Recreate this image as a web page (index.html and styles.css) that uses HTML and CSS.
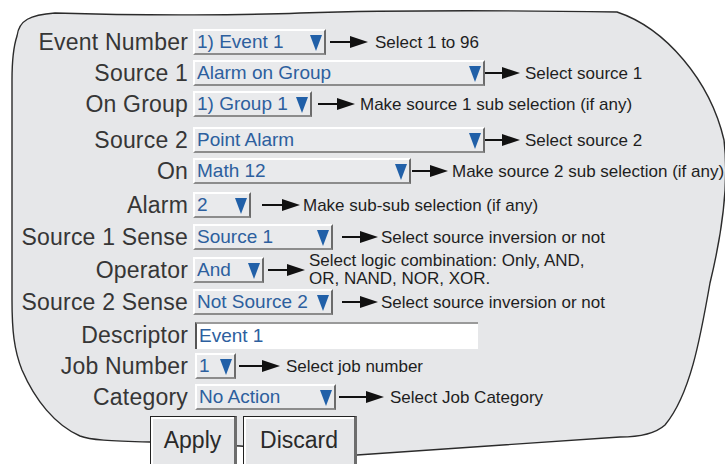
FILE: index.html
```html
<!DOCTYPE html>
<html lang="en">
  <head>
    <meta charset="utf-8" />
    <meta name="viewport" content="width=device-width, initial-scale=1" />
    <title>Event configuration</title>
    <link rel="stylesheet" href="styles.css">
  </head>

  <body>
    <main class="screen">
      <svg class="outline" width="725" height="464" viewBox="0 0 725 464">
        <path d="M17,36 C19,20 30,15 55,13 C150,16 250,15 300,13 C400,10 550,11 617,12 C665,28 710,80 724,140 C730,190 718,250 710,283 C700,340 690,395 665,425 C655,434 640,437 620,437 L357,455 L240,446 L150,442 C110,441 90,440 80,436 C55,425 35,400 22,370 C14,350 12,330 12,300 L12,80 C12,55 14,45 17,36 Z" />
      </svg>

      <section class="form">
        <label class="lbl">Event Number</label>
        <div class="ctl event">
          <div class="sel"><span class="val">1) Event 1</span><i class="drop"></i></div>
          <span class="arrow"></span>
          <span class="note">Select 1 to 96</span>
        </div>

        <label class="lbl">Source 1</label>
        <div class="ctl src">
          <div class="sel"><span class="val">Alarm on Group</span><i class="drop"></i></div>
          <span class="arrow"></span>
          <span class="note">Select source 1</span>
        </div>

        <label class="lbl">On Group</label>
        <div class="ctl group">
          <div class="sel"><span class="val">1) Group 1</span><i class="drop"></i></div>
          <span class="arrow"></span>
          <span class="note">Make source 1 sub selection (if any)</span>
        </div>

        <label class="lbl">Source 2</label>
        <div class="ctl src">
          <div class="sel"><span class="val">Point Alarm</span><i class="drop"></i></div>
          <span class="arrow"></span>
          <span class="note">Select source 2</span>
        </div>

        <label class="lbl">On</label>
        <div class="ctl on">
          <div class="sel"><span class="val">Math 12</span><i class="drop"></i></div>
          <span class="arrow"></span>
          <span class="note">Make source 2 sub selection (if any)</span>
        </div>

        <label class="lbl">Alarm</label>
        <div class="ctl alarm">
          <div class="sel"><span class="val">2</span><i class="drop"></i></div>
          <span class="arrow"></span>
          <span class="note">Make sub-sub selection (if any)</span>
        </div>

        <label class="lbl">Source 1 Sense</label>
        <div class="ctl sense">
          <div class="sel"><span class="val">Source 1</span><i class="drop"></i></div>
          <span class="arrow"></span>
          <span class="note">Select source inversion or not</span>
        </div>

        <label class="lbl">Operator</label>
        <div class="ctl oper">
          <div class="sel"><span class="val">And</span><i class="drop"></i></div>
          <span class="arrow"></span>
          <span class="note two">Select logic combination: Only, AND,<br>OR, NAND, NOR, XOR.</span>
        </div>

        <label class="lbl">Source 2 Sense</label>
        <div class="ctl sense">
          <div class="sel"><span class="val">Not Source 2</span><i class="drop"></i></div>
          <span class="arrow"></span>
          <span class="note">Select source inversion or not</span>
        </div>

        <label class="lbl">Descriptor</label>
        <div class="ctl desc">
          <div class="text"><span class="val">Event 1</span></div>
        </div>

        <label class="lbl">Job Number</label>
        <div class="ctl job">
          <div class="sel"><span class="val">1</span><i class="drop"></i></div>
          <span class="arrow"></span>
          <span class="note">Select job number</span>
        </div>

        <label class="lbl">Category</label>
        <div class="ctl cat">
          <div class="sel"><span class="val">No Action</span><i class="drop"></i></div>
          <span class="arrow"></span>
          <span class="note">Select Job Category</span>
        </div>
      </section>

      <div class="actions">
        <button class="btn apply">Apply</button>
        <button class="btn discard">Discard</button>
      </div>
    </main>
  </body>
</html>
```

FILE: styles.css
```css
body {
    margin: 0;
    background: #fff;
    overflow: hidden;
    font-family: "Liberation Sans", Arial, sans-serif;
}
.screen {
    position: relative;
    width: 725px;
    height: 464px;
    overflow: hidden;
}
.outline {
    position: absolute;
    top: 0;
    left: 0;
}
.outline path {
    fill: #e6e7e9;
    stroke: #2b2b2b;
    stroke-width: 1.4;
}

.form {
    position: relative;
    display: grid;
    grid-template-columns: 188px 1fr;
    grid-template-rows: 31px 31px 36px 31px 34px 32px 33px 32px 33px 31px 31px 26px;
    column-gap: 5px;
    padding-top: 29px;
}
.lbl {
    text-align: right;
    font-size: 23px;
    letter-spacing: 0.2px;
    line-height: 26px;
    height: 26px;
    color: #363636;
    white-space: nowrap;
}
.ctl {
    display: flex;
    align-items: center;
    height: 26px;
}

.sel {
    display: flex;
    align-items: center;
    box-sizing: border-box;
    height: 26px;
    flex: none;
    background: #e9eaec;
    border-top: 2px solid #fff;
    border-left: 2px solid #fff;
    border-right: 2px solid #6b6b6b;
    border-bottom: 2px solid #8c8c8c;
}
.val {
    flex: 1;
    padding-left: 2px;
    font-size: 19px;
    line-height: 22px;
    color: #2d5f9e;
    white-space: nowrap;
    overflow: hidden;
}
.drop {
    flex: none;
    width: 0;
    height: 0;
    margin: 2px 2px 0 0;
    border-left: 6.5px solid transparent;
    border-right: 6.5px solid transparent;
    border-top: 16px solid #2160a8;
}
.text {
    box-sizing: border-box;
    width: 283px;
    height: 27px;
    margin-left: 2px;
    background: #fff;
    border-top: 2px solid #9a9a9a;
    border-left: 2px solid #555;
    display: flex;
    align-items: center;
}

.arrow {
    display: flex;
    align-items: center;
    flex: none;
    height: 12px;
}
.arrow::before {
    content: "";
    flex: 1;
    height: 2px;
    background: #111;
}
.arrow::after {
    content: "";
    width: 0;
    height: 0;
    border-left: 18px solid #111;
    border-top: 6px solid transparent;
    border-bottom: 6px solid transparent;
}
.note {
    font-size: 17px;
    line-height: 17px;
    color: #1e1e1e;
    white-space: nowrap;
}
.note.two {
    line-height: 18px;
}

/* per row sizes, measured off the panel */
.event .sel { width: 133px; }
.event .arrow { margin-left: 4px; width: 38px; }
.event .note { margin-left: 7px; }

.src .sel { width: 292px; }
.src .arrow { width: 35px; }
.src .note { margin-left: 5px; }

.group .sel { width: 119px; }
.group .arrow { margin-left: 6px; width: 37px; }
.group .note { margin-left: 5px; }

.on .sel { width: 218px; }
.on .arrow { margin-left: 1px; width: 36px; }
.on .note { margin-left: 4px; }

.alarm .sel { width: 58px; }
.alarm .arrow { margin-left: 11px; width: 38px; }
.alarm .note { margin-left: 3px; }

.sense .sel { width: 140px; }
.sense .arrow { margin-left: 9px; width: 36px; }
.sense .note { margin-left: 3px; }

.oper .sel { width: 71px; }
.oper .arrow { margin-left: 4px; width: 37px; }
.oper .note { margin-left: 4px; }

.job .sel { width: 41px; margin-left: 2px; }
.job .arrow { margin-left: 3px; width: 41px; }
.job .note { margin-left: 6px; }

.cat .sel { width: 141px; margin-left: 2px; }
.cat .arrow { margin-left: 3px; width: 45px; }
.cat .note { margin-left: 6px; }

.actions {
    position: relative;
    display: flex;
    align-items: flex-start;
    gap: 6px;
    margin-top: 6px;
    padding-left: 150px;
}
.btn {
    box-sizing: border-box;
    padding: 10px 0 24px;
    background: #e6e7e9;
    border: none;
    border-top: 1px solid #222;
    border-left: 1px solid #222;
    border-right: 3px solid #6d6d6d;
    box-shadow: inset 2px 2px 0 #fff;
    font-family: "Liberation Sans", Arial, sans-serif;
    font-size: 23px;
    line-height: 26px;
    color: #2a2a2a;
    text-align: center;
}
.apply { width: 87px; }
.discard { width: 114px; }
```
